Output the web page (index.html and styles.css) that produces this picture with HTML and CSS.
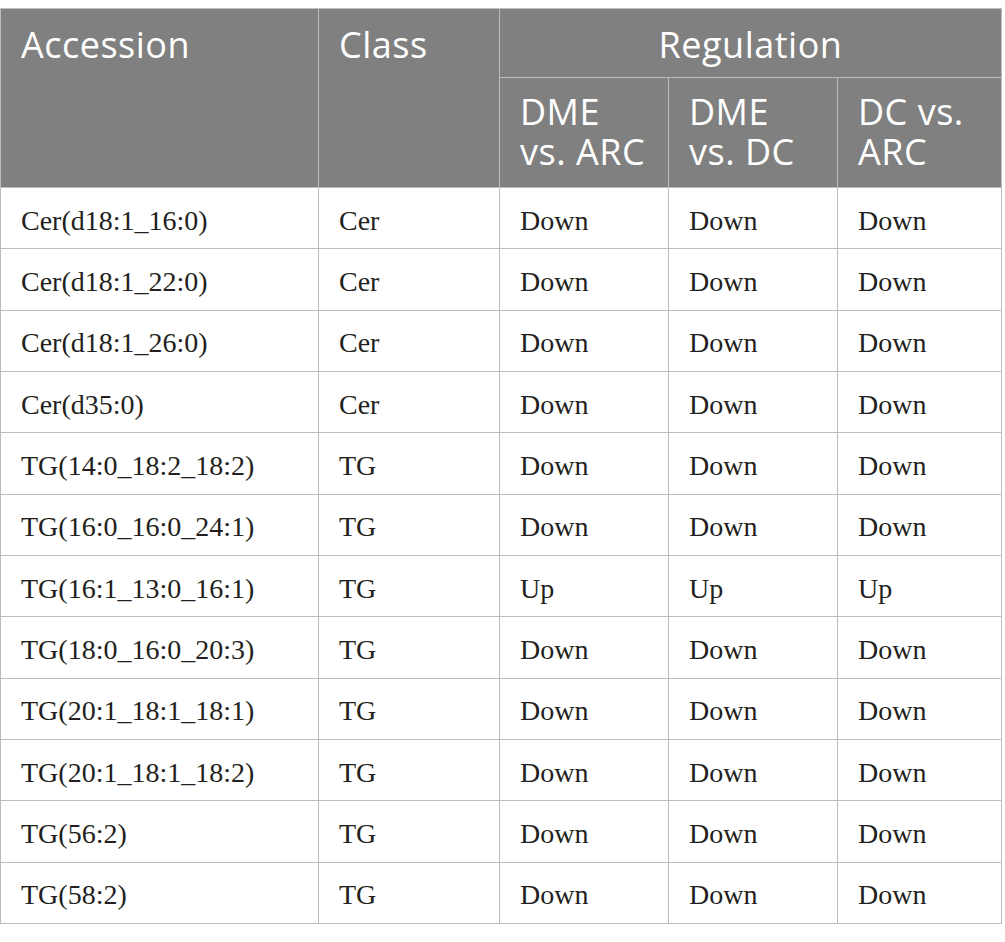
FILE: index.html
```html
<!DOCTYPE html>
<html>
<head>
<meta charset="utf-8">
<link rel="stylesheet" href="styles.css">
</head>
<body>
<table class="data">
  <colgroup>
    <col class="c1"><col class="c2"><col class="c3"><col class="c4"><col class="c5">
  </colgroup>
  <thead>
    <tr class="h1">
      <th rowspan="2" class="top">Accession</th>
      <th rowspan="2" class="top">Class</th>
      <th colspan="3" class="center">Regulation</th>
    </tr>
    <tr class="h2">
      <th><span class="ln">DME</span><span class="ln">vs. ARC</span></th>
      <th><span class="ln">DME</span><span class="ln">vs. DC</span></th>
      <th><span class="ln">DC vs.</span><span class="ln">ARC</span></th>
    </tr>
  </thead>
  <tbody>
    <tr><td>Cer(d18:1_16:0)</td><td>Cer</td><td>Down</td><td>Down</td><td>Down</td></tr>
    <tr><td>Cer(d18:1_22:0)</td><td>Cer</td><td>Down</td><td>Down</td><td>Down</td></tr>
    <tr><td>Cer(d18:1_26:0)</td><td>Cer</td><td>Down</td><td>Down</td><td>Down</td></tr>
    <tr><td>Cer(d35:0)</td><td>Cer</td><td>Down</td><td>Down</td><td>Down</td></tr>
    <tr><td>TG(14:0_18:2_18:2)</td><td>TG</td><td>Down</td><td>Down</td><td>Down</td></tr>
    <tr><td>TG(16:0_16:0_24:1)</td><td>TG</td><td>Down</td><td>Down</td><td>Down</td></tr>
    <tr><td>TG(16:1_13:0_16:1)</td><td>TG</td><td>Up</td><td>Up</td><td>Up</td></tr>
    <tr><td>TG(18:0_16:0_20:3)</td><td>TG</td><td>Down</td><td>Down</td><td>Down</td></tr>
    <tr><td>TG(20:1_18:1_18:1)</td><td>TG</td><td>Down</td><td>Down</td><td>Down</td></tr>
    <tr><td>TG(20:1_18:1_18:2)</td><td>TG</td><td>Down</td><td>Down</td><td>Down</td></tr>
    <tr><td>TG(56:2)</td><td>TG</td><td>Down</td><td>Down</td><td>Down</td></tr>
    <tr><td>TG(58:2)</td><td>TG</td><td>Down</td><td>Down</td><td>Down</td></tr>
  </tbody>
</table>
</body>
</html>
```
FILE: styles.css
```css
html, body {
  margin: 0;
  padding: 0;
  background: #ffffff;
}
body {
  padding-top: 8px;
}
.data {
  border-collapse: collapse;
  table-layout: fixed;
  width: 1002px;
}
.c1 { width: 318px; }
.c2 { width: 181px; }
.c3 { width: 169px; }
.c4 { width: 169px; }
.c5 { width: 164px; }

.data th, .data td {
  border: 1px solid #bdbdbd;
  text-align: left;
  padding: 0 20px;
  box-sizing: border-box;
}
.data th {
  background: #7f807f;
  color: #ffffff;
  font-family: "Open Sans", "Lato", sans-serif;
  font-weight: 400;
  font-size: 36px;
  letter-spacing: 0.5px;
  line-height: 40px;
  vertical-align: top;
}
.h1 th {
  height: 69px;
  padding-top: 16px;
}
.h1 th.center {
  text-align: center;
}
.h2 th {
  height: 110px;
  padding-top: 14px;
}
.ln {
  display: block;
  height: 40px;
  white-space: nowrap;
}
.data td {
  font-family: "Liberation Serif", "Times New Roman", serif;
  font-size: 28px;
  color: #231f20;
  height: 61.33px;
  vertical-align: middle;
  padding-top: 5px;
}
```
